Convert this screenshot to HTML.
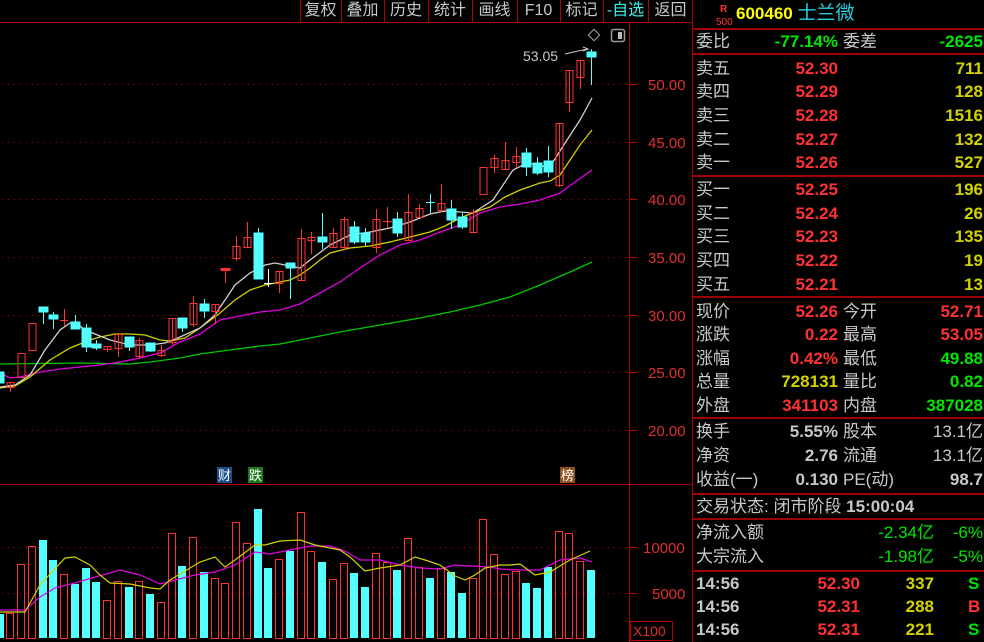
<!DOCTYPE html>
<html><head><meta charset="utf-8"><style>
*{margin:0;padding:0;box-sizing:border-box}
body{width:984px;height:642px;background:#000;overflow:hidden;position:relative;font-family:"Liberation Sans","Noto Sans CJK SC",sans-serif;}
.m{position:absolute;top:0;height:22px;line-height:21px;font-size:16px;color:#c8c8c8;text-align:center}
.t{position:absolute;font-size:17px;line-height:20px;white-space:nowrap}
.l{color:#c8c8c8;left:696px}
.l2{color:#c8c8c8;left:843px}
.v1{right:146px;font-weight:bold}
.v2{right:1px;font-weight:bold}
.r{color:#ff3232}.y{color:#d2d200}.g{color:#00e600}.w{color:#c8c8c8}
.hl{position:absolute;left:693px;right:0;height:2px;background:#a00000}
</style></head><body>
<svg width="984" height="642" style="position:absolute;left:0;top:0">
<g stroke="#b00000" stroke-width="1">
<line x1="0" y1="22.5" x2="693" y2="22.5"/>
<line x1="629.5" y1="22" x2="629.5" y2="642"/>
<line x1="0" y1="484.5" x2="693" y2="484.5"/>
<line x1="692.5" y1="0" x2="692.5" y2="642"/>
<line x1="300.5" y1="0" x2="300.5" y2="22"/><line x1="341.5" y1="0" x2="341.5" y2="22"/><line x1="384.5" y1="0" x2="384.5" y2="22"/><line x1="428.5" y1="0" x2="428.5" y2="22"/><line x1="472.5" y1="0" x2="472.5" y2="22"/><line x1="517.5" y1="0" x2="517.5" y2="22"/><line x1="560.5" y1="0" x2="560.5" y2="22"/><line x1="603.5" y1="0" x2="603.5" y2="22"/><line x1="648.5" y1="0" x2="648.5" y2="22"/>
<rect x="630.5" y="621.5" width="42" height="19" fill="none"/>
</g>
<g stroke="#c00000" stroke-dasharray="1,5" stroke-width="1">
<line x1="2" y1="84.5" x2="629" y2="84.5"/><line x1="2" y1="142.5" x2="629" y2="142.5"/><line x1="2" y1="199.5" x2="629" y2="199.5"/><line x1="2" y1="257.5" x2="629" y2="257.5"/><line x1="2" y1="315.5" x2="629" y2="315.5"/><line x1="2" y1="372.5" x2="629" y2="372.5"/><line x1="2" y1="430.5" x2="629" y2="430.5"/>
<line x1="2" y1="547.5" x2="629" y2="547.5"/><line x1="2" y1="593.5" x2="629" y2="593.5"/>
</g>
<g stroke="#c00000"><line x1="629" y1="84.5" x2="637" y2="84.5"/><line x1="629" y1="142.5" x2="637" y2="142.5"/><line x1="629" y1="199.5" x2="637" y2="199.5"/><line x1="629" y1="257.5" x2="637" y2="257.5"/><line x1="629" y1="315.5" x2="637" y2="315.5"/><line x1="629" y1="372.5" x2="637" y2="372.5"/><line x1="629" y1="430.5" x2="637" y2="430.5"/><line x1="629" y1="547.5" x2="637" y2="547.5"/><line x1="629" y1="593.5" x2="637" y2="593.5"/></g>
<g fill="#e03030" font-size="15" font-family="Liberation Sans,sans-serif">
<text x="648" y="90">50.00</text><text x="648" y="148">45.00</text><text x="648" y="205">40.00</text><text x="648" y="263">35.00</text><text x="648" y="321">30.00</text><text x="648" y="378">25.00</text><text x="648" y="436">20.00</text>
<text x="643" y="553">10000</text><text x="652" y="599">5000</text>
<text x="633" y="636" font-size="14">X100</text>
</g>
<!-- MAs -->
<g fill="none" stroke-width="1.3">
<polyline stroke="#00c800" points="0,364 80,363 130,364 150,362 180,358 200,354 230,350 260,346 280,344 300,340 340,332 380,325 420,318 450,312 480,305 510,297 540,285 570,272 592,262"/>
<polyline stroke="#e000e0" points="0,373 10,378 20,377 40,372 60,369 80,367 100,365 120,362 140,358 160,353 180,342 200,334 220,320 240,316 260,312 280,310 300,304 320,293 340,282 360,268 380,255 400,245 420,240 440,232 460,225 480,213 500,207 520,204 540,200 560,193 575,182 592,170"/>
<polyline stroke="#d2d200" points="0,388 15,386 30,377 50,360 70,348 90,340 100,337 115,334 130,334 145,335 160,340 170,341 185,338 200,328 220,313 235,300 250,290 265,285 280,282 290,280 300,275 310,268 320,260 330,253 350,248 370,246 390,242 410,237 430,232 445,226 460,218 475,212 490,207 505,197 520,190 540,183 550,181 560,175 570,160 580,145 592,130"/>
<polyline stroke="#d0d0d0" points="0,387 15,385 30,375 45,350 60,330 70,323 75,322 85,330 100,336 110,340 130,345 150,345 165,343 180,337 200,328 215,315 225,300 235,285 250,273 265,265 275,263 290,266 300,268 310,260 330,245 350,235 370,232 390,228 410,222 430,214 445,211 460,212 473,213 493,200 513,170 527,163 547,167 553,162 567,140 580,120 592,98"/>
</g>
<!-- candles -->
<g stroke="#ff3232" fill="none">
<line x1="10.5" y1="382" x2="10.5" y2="392"/><rect x="7" y="382.5" width="7" height="5"/>
<rect x="18" y="353.5" width="7" height="24"/>
<rect x="29" y="323.5" width="7" height="27"/>
<line x1="60" y1="320.5" x2="68" y2="320.5"/><line x1="64.5" y1="309" x2="64.5" y2="326"/>
<line x1="107.5" y1="346" x2="107.5" y2="352"/><rect x="104" y="346.5" width="7" height="3"/>
<line x1="118.5" y1="334" x2="118.5" y2="357"/><rect x="115" y="334.5" width="7" height="14"/>
<line x1="139.5" y1="338" x2="139.5" y2="359"/><rect x="136" y="340.5" width="7" height="16"/>
<line x1="161.5" y1="345" x2="161.5" y2="357"/><rect x="158" y="350.5" width="7" height="5"/>
<line x1="172.5" y1="318" x2="172.5" y2="345"/><rect x="169" y="318.5" width="7" height="24"/>
<line x1="193.5" y1="296" x2="193.5" y2="327"/><rect x="190" y="303.5" width="7" height="21"/>
<line x1="215.5" y1="304" x2="215.5" y2="324"/><rect x="212" y="304.5" width="7" height="7"/>
<line x1="225.5" y1="269" x2="225.5" y2="283"/><rect x="221" y="268.5" width="9" height="2" fill="#ff3232"/>
<line x1="236.5" y1="236" x2="236.5" y2="261"/><rect x="233" y="246.5" width="7" height="12"/>
<line x1="247.5" y1="222" x2="247.5" y2="247"/><rect x="244" y="237.5" width="7" height="10"/>
<line x1="279.5" y1="271" x2="279.5" y2="293"/><rect x="276" y="271.5" width="7" height="12"/>
<line x1="301.5" y1="229" x2="301.5" y2="280"/><rect x="298" y="238.5" width="7" height="42"/>
<line x1="311.5" y1="232" x2="311.5" y2="254"/><rect x="308" y="237.5" width="7" height="3"/>
<line x1="333.5" y1="228" x2="333.5" y2="247"/><rect x="330" y="233.5" width="7" height="14"/>
<line x1="344.5" y1="217" x2="344.5" y2="250"/><rect x="341" y="219.5" width="7" height="28"/>
<line x1="376.5" y1="209" x2="376.5" y2="253"/><rect x="373" y="219.5" width="7" height="28"/>
<line x1="387.5" y1="207" x2="387.5" y2="228"/><line x1="383" y1="221.5" x2="392" y2="221.5"/>
<line x1="408.5" y1="194" x2="408.5" y2="240"/><rect x="405" y="212.5" width="7" height="28"/>
<line x1="419.5" y1="204" x2="419.5" y2="217"/><rect x="416" y="208.5" width="7" height="9"/>
<line x1="441.5" y1="184" x2="441.5" y2="212"/><rect x="438" y="203.5" width="7" height="7"/>
<line x1="473.5" y1="209" x2="473.5" y2="232"/><rect x="470" y="212.5" width="7" height="20"/>
<rect x="480" y="167.5" width="7" height="27"/>
<line x1="494.5" y1="155" x2="494.5" y2="173"/><rect x="491" y="158.5" width="7" height="9"/>
<line x1="505.5" y1="142" x2="505.5" y2="170"/><rect x="502" y="160.5" width="7" height="9"/>
<line x1="516.5" y1="147" x2="516.5" y2="168"/><rect x="513" y="156.5" width="7" height="6"/>
<line x1="559.5" y1="123" x2="559.5" y2="187"/><rect x="556" y="123.5" width="7" height="62"/>
<line x1="569.5" y1="70" x2="569.5" y2="112"/><rect x="566" y="70.5" width="7" height="32"/>
<line x1="580.5" y1="60" x2="580.5" y2="89"/><rect x="577" y="60.5" width="7" height="17"/>
</g>
<g stroke="#54ffff" fill="#54ffff">
<rect x="0" y="372" width="4" height="11"/>
<line x1="43.5" y1="307" x2="43.5" y2="324"/><rect x="39" y="307" width="9" height="5"/>
<line x1="53.5" y1="312" x2="53.5" y2="329"/><rect x="49" y="315" width="9" height="4"/>
<line x1="75.5" y1="315" x2="75.5" y2="329"/><rect x="71" y="322" width="9" height="7"/>
<line x1="86.5" y1="324" x2="86.5" y2="352"/><rect x="82" y="328" width="9" height="19"/>
<line x1="96.5" y1="340" x2="96.5" y2="350"/><rect x="92" y="344" width="9" height="4"/>
<line x1="129.5" y1="337" x2="129.5" y2="351"/><rect x="125" y="337" width="9" height="10"/>
<line x1="150.5" y1="343" x2="150.5" y2="352"/><rect x="146" y="343" width="9" height="8"/>
<line x1="182.5" y1="318" x2="182.5" y2="332"/><rect x="178" y="318" width="9" height="10"/>
<line x1="204.5" y1="299" x2="204.5" y2="318"/><rect x="200" y="304" width="9" height="7"/>
<line x1="258.5" y1="228" x2="258.5" y2="279"/><rect x="254" y="233" width="9" height="46"/>
<line x1="290.5" y1="263" x2="290.5" y2="299"/><rect x="286" y="263" width="9" height="5"/>
<line x1="322.5" y1="213" x2="322.5" y2="249"/><rect x="318" y="237" width="9" height="5"/>
<line x1="354.5" y1="221" x2="354.5" y2="244"/><rect x="350" y="227" width="9" height="15"/>
<line x1="365.5" y1="228" x2="365.5" y2="246"/><rect x="361" y="233" width="9" height="9"/>
<line x1="397.5" y1="212" x2="397.5" y2="237"/><rect x="393" y="219" width="9" height="14"/>
<line x1="430.5" y1="194" x2="430.5" y2="213"/><line x1="426" y1="202.5" x2="435" y2="202.5"/>
<line x1="451.5" y1="200" x2="451.5" y2="229"/><rect x="447" y="209" width="9" height="11"/>
<line x1="462.5" y1="213" x2="462.5" y2="229"/><rect x="458" y="217" width="9" height="10"/>
<line x1="526.5" y1="148" x2="526.5" y2="176"/><rect x="522" y="153" width="9" height="14"/>
<line x1="537.5" y1="157" x2="537.5" y2="175"/><rect x="533" y="163" width="9" height="10"/>
<line x1="548.5" y1="146" x2="548.5" y2="177"/><rect x="544" y="161" width="9" height="11"/>
<line x1="591.5" y1="49" x2="591.5" y2="85"/><rect x="587" y="52" width="9" height="5"/>
</g>
<g stroke="#fff"><line x1="268.5" y1="269" x2="268.5" y2="287"/><line x1="264" y1="283.5" x2="273" y2="283.5"/></g>
<text x="523" y="61" fill="#c8c8c8" font-size="14" font-family="Liberation Sans,sans-serif">53.05</text>
<polyline points="565,54 578,51 588,49" fill="none" stroke="#c8c8c8"/><polyline points="583,47 588,49 583,51" fill="none" stroke="#c8c8c8"/>
<rect x="590" y="31" width="8" height="8" transform="rotate(45 594 35)" fill="none" stroke="#aaa"/>
<rect x="611.5" y="29.5" width="13" height="12" rx="2" fill="none" stroke="#999" stroke-width="1.5"/><rect x="618" y="32" width="4" height="7" fill="#bbb"/>
<!-- volume -->
<g stroke="#ff3232" fill="none">
<rect x="6.5" y="613.5" width="7" height="25"/><rect x="17.5" y="564.5" width="7" height="74"/><rect x="28.5" y="546.5" width="7" height="92"/><rect x="60.5" y="574.5" width="7" height="64"/><rect x="103.5" y="600.5" width="7" height="38"/><rect x="114.5" y="581.5" width="7" height="57"/><rect x="135.5" y="581.5" width="7" height="57"/><rect x="157.5" y="602.5" width="7" height="36"/><rect x="168.5" y="533.5" width="7" height="105"/><rect x="189.5" y="537.5" width="7" height="101"/><rect x="211.5" y="578.5" width="7" height="60"/><rect x="221.5" y="583.5" width="7" height="55"/><rect x="232.5" y="522.5" width="7" height="116"/><rect x="243.5" y="543.5" width="7" height="95"/><rect x="275.5" y="559.5" width="7" height="79"/><rect x="297.5" y="512.5" width="7" height="126"/><rect x="307.5" y="551.5" width="7" height="87"/><rect x="329.5" y="579.5" width="7" height="59"/><rect x="340.5" y="563.5" width="7" height="75"/><rect x="372.5" y="553.5" width="7" height="85"/><rect x="383.5" y="562.5" width="7" height="76"/><rect x="404.5" y="538.5" width="7" height="100"/><rect x="415.5" y="567.5" width="7" height="71"/><rect x="437.5" y="568.5" width="7" height="70"/><rect x="469.5" y="578.5" width="7" height="60"/><rect x="479.5" y="519.5" width="7" height="119"/><rect x="490.5" y="554.5" width="7" height="84"/><rect x="501.5" y="574.5" width="7" height="64"/><rect x="512.5" y="571.5" width="7" height="67"/><rect x="555.5" y="531.5" width="7" height="107"/><rect x="565.5" y="533.5" width="7" height="105"/><rect x="576.5" y="561.5" width="7" height="77"/>
</g>
<g fill="#54ffff">
<rect x="0" y="614" width="4" height="24"/><rect x="39" y="540" width="8" height="98"/><rect x="49" y="560" width="8" height="78"/><rect x="71" y="584" width="8" height="54"/><rect x="82" y="568" width="8" height="70"/><rect x="92" y="582" width="8" height="56"/><rect x="125" y="587" width="8" height="51"/><rect x="146" y="594" width="8" height="44"/><rect x="178" y="566" width="8" height="72"/><rect x="200" y="572" width="8" height="66"/><rect x="254" y="509" width="8" height="129"/><rect x="264" y="568" width="8" height="70"/><rect x="286" y="551" width="8" height="87"/><rect x="318" y="562" width="8" height="76"/><rect x="350" y="573" width="8" height="65"/><rect x="361" y="587" width="8" height="51"/><rect x="393" y="570" width="8" height="68"/><rect x="426" y="578" width="8" height="60"/><rect x="447" y="572" width="8" height="66"/><rect x="458" y="593" width="8" height="45"/><rect x="522" y="583" width="8" height="55"/><rect x="533" y="588" width="8" height="50"/><rect x="544" y="567" width="8" height="71"/><rect x="587" y="570" width="8" height="68"/>
</g>
<g fill="none" stroke-width="1.2">
<polyline stroke="#e000e0" points="0,610 25,610 40,597 55,588 75,583 95,577 110,573 120,570 140,575 160,584 175,580 195,575 215,572 235,565 255,552 270,554 290,550 310,546 330,546 345,551 360,560 380,560 400,565 420,568 440,569 455,565 470,566 490,567 500,569 520,570 540,570 560,560 580,558 592,562"/>
<polyline stroke="#d2d200" points="0,612 25,612 40,585 65,558 75,557 90,565 100,575 110,583 130,584 150,588 160,589 170,580 185,571 200,562 215,557 225,567 235,560 255,545 265,545 280,541 300,540 315,545 340,550 350,557 365,571 380,568 400,565 415,557 425,560 440,565 455,576 465,580 475,575 485,568 500,565 510,565 520,564 535,575 550,572 570,560 590,551"/>
</g>
<g font-size="13" font-family="Noto Sans CJK SC,sans-serif" fill="#fff">
<rect x="217" y="467" width="15" height="16" fill="#1d4f8a"/><text x="218" y="480">财</text>
<rect x="248" y="467" width="15" height="16" fill="#1f7a1f"/><text x="249" y="480">跌</text>
<rect x="560" y="467" width="15" height="16" fill="#8a5020"/><text x="561" y="480">榜</text>
</g>
<g fill="#ff3232" font-family="Liberation Sans,sans-serif" font-weight="bold"><text x="720" y="12" font-size="10">R</text><text x="716" y="25" font-size="10" font-weight="normal">500</text></g>
</svg>
<div class="m" style="left:300px;width:41px">复权</div><div class="m" style="left:341px;width:43px">叠加</div><div class="m" style="left:384px;width:44px">历史</div><div class="m" style="left:428px;width:44px">统计</div><div class="m" style="left:472px;width:45px">画线</div><div class="m" style="left:517px;width:43px">F10</div><div class="m" style="left:560px;width:43px">标记</div><div class="m" style="left:603px;width:45px;color:#3cf0f0">-自选</div><div class="m" style="left:648px;width:45px">返回</div>
<div class="t" style="left:736px;top:4px;color:#ffff00;font-weight:bold;font-size:17px">600460 <span style="color:#2ad0e0;font-weight:normal;font-size:19px">士兰微</span></div>
<div class="hl" style="top:28px"></div><div class="hl" style="top:53px"></div><div class="hl" style="top:175px"></div><div class="hl" style="top:296px"></div><div class="hl" style="top:417px"></div><div class="hl" style="top:493px"></div><div class="hl" style="top:518px"></div><div class="hl" style="top:570px"></div>
<div class="t l" style="top:32px">委比</div><div class="t v1 g" style="top:32px">-77.14%</div><div class="t l2" style="top:32px">委差</div><div class="t v2 g" style="top:32px">-2625</div>
<div class="t l" style="top:59px">卖五</div><div class="t v1 r" style="top:59px">52.30</div><div class="t v2 y" style="top:59px">711</div>
<div class="t l" style="top:82px">卖四</div><div class="t v1 r" style="top:82px">52.29</div><div class="t v2 y" style="top:82px">128</div>
<div class="t l" style="top:106px">卖三</div><div class="t v1 r" style="top:106px">52.28</div><div class="t v2 y" style="top:106px">1516</div>
<div class="t l" style="top:130px">卖二</div><div class="t v1 r" style="top:130px">52.27</div><div class="t v2 y" style="top:130px">132</div>
<div class="t l" style="top:153px">卖一</div><div class="t v1 r" style="top:153px">52.26</div><div class="t v2 y" style="top:153px">527</div>
<div class="t l" style="top:180px">买一</div><div class="t v1 r" style="top:180px">52.25</div><div class="t v2 y" style="top:180px">196</div>
<div class="t l" style="top:204px">买二</div><div class="t v1 r" style="top:204px">52.24</div><div class="t v2 y" style="top:204px">26</div>
<div class="t l" style="top:227px">买三</div><div class="t v1 r" style="top:227px">52.23</div><div class="t v2 y" style="top:227px">135</div>
<div class="t l" style="top:251px">买四</div><div class="t v1 r" style="top:251px">52.22</div><div class="t v2 y" style="top:251px">19</div>
<div class="t l" style="top:275px">买五</div><div class="t v1 r" style="top:275px">52.21</div><div class="t v2 y" style="top:275px">13</div>
<div class="t l" style="top:302px">现价</div><div class="t v1 r" style="top:302px">52.26</div><div class="t l2" style="top:302px">今开</div><div class="t v2 r" style="top:302px">52.71</div>
<div class="t l" style="top:325px">涨跌</div><div class="t v1 r" style="top:325px">0.22</div><div class="t l2" style="top:325px">最高</div><div class="t v2 r" style="top:325px">53.05</div>
<div class="t l" style="top:349px">涨幅</div><div class="t v1 r" style="top:349px">0.42%</div><div class="t l2" style="top:349px">最低</div><div class="t v2 g" style="top:349px">49.88</div>
<div class="t l" style="top:372px">总量</div><div class="t v1 y" style="top:372px">728131</div><div class="t l2" style="top:372px">量比</div><div class="t v2 g" style="top:372px">0.82</div>
<div class="t l" style="top:396px">外盘</div><div class="t v1 r" style="top:396px">341103</div><div class="t l2" style="top:396px">内盘</div><div class="t v2 g" style="top:396px">387028</div>
<div class="t l" style="top:422px">换手</div><div class="t v1 w" style="top:422px">5.55%</div><div class="t l2" style="top:422px">股本</div><div class="t v2 w" style="top:422px;font-weight:normal">13.1亿</div>
<div class="t l" style="top:446px">净资</div><div class="t v1 w" style="top:446px">2.76</div><div class="t l2" style="top:446px">流通</div><div class="t v2 w" style="top:446px;font-weight:normal">13.1亿</div>
<div class="t l" style="top:470px">收益(一)</div><div class="t v1 w" style="top:470px">0.130</div><div class="t l2" style="top:470px">PE(动)</div><div class="t v2 w" style="top:470px">98.7</div>
<div class="t l" style="top:497px">交易状态: 闭市阶段 <b>15:00:04</b></div>
<div class="t l" style="top:523px">净流入额</div><div class="t g" style="top:523px;right:50px">-2.34亿</div><div class="t g" style="top:523px;right:1px">-6%</div>
<div class="t l" style="top:547px">大宗流入</div><div class="t g" style="top:547px;right:50px">-1.98亿</div><div class="t g" style="top:547px;right:1px">-5%</div>
<div class="t l" style="top:574px;font-weight:bold">14:56</div><div class="t r" style="top:574px;right:124px;font-weight:bold">52.30</div><div class="t y" style="top:574px;right:50px;font-weight:bold">337</div><div class="t g" style="top:574px;left:968px;font-weight:bold">S</div>
<div class="t l" style="top:597px;font-weight:bold">14:56</div><div class="t r" style="top:597px;right:124px;font-weight:bold">52.31</div><div class="t y" style="top:597px;right:50px;font-weight:bold">288</div><div class="t r" style="top:597px;left:968px;font-weight:bold">B</div>
<div class="t l" style="top:620px;font-weight:bold">14:56</div><div class="t r" style="top:620px;right:124px;font-weight:bold">52.31</div><div class="t y" style="top:620px;right:50px;font-weight:bold">221</div><div class="t g" style="top:620px;left:968px;font-weight:bold">S</div>
</body></html>
